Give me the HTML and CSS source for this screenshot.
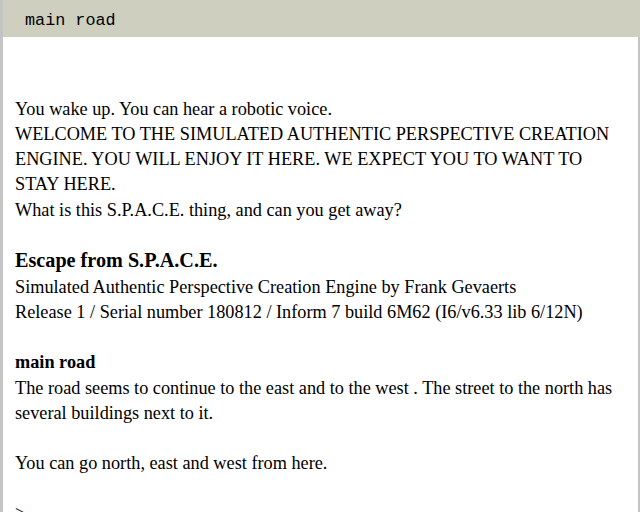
FILE: index.html
```html
<!DOCTYPE html>
<html>
<head>
<meta charset="utf-8">
<link rel="stylesheet" href="styles.css">
</head>
<body>
<div class="status"><span class="loc">main road</span></div>
<div class="main">
<div class="buffer">
<p class="line">You wake up. You can hear a robotic voice.</p>
<p class="line">WELCOME TO THE SIMULATED AUTHENTIC PERSPECTIVE CREATION ENGINE. YOU WILL ENJOY IT HERE. WE EXPECT YOU TO WANT TO STAY HERE.</p>
<p class="line">What is this S.P.A.C.E. thing, and can you get away?</p>
<p class="blank">&nbsp;</p>
<p class="title">Escape from S.P.A.C.E.</p>
<p class="line">Simulated Authentic Perspective Creation Engine by Frank Gevaerts</p>
<p class="line">Release 1 / Serial number 180812 / Inform 7 build 6M62 (I6/v6.33 lib 6/12N)</p>
<p class="blank">&nbsp;</p>
<p class="line bold">main road</p>
<p class="line">The road seems to continue to the east and to the west . The street to the north has several buildings next to it.</p>
<p class="blank">&nbsp;</p>
<p class="line">You can go north, east and west from here.</p>
<p class="blank">&nbsp;</p>
<p class="line prompt">&gt;</p>
</div>
</div>
</body>
</html>
```
FILE: styles.css
```css
html, body {
  margin: 0;
  padding: 0;
  height: 100%;
  overflow: hidden;
}
body {
  background: #c4c4c4;
  font-family: "Liberation Serif", "Times New Roman", serif;
  font-size: 18.25px;
  color: #000;
  display: flex;
  flex-direction: column;
}
.status {
  height: 37px;
  background: #cfcfc0;
  margin-left: 3px;
  display: flex;
  align-items: center;
  padding-left: 22px;
  flex-shrink: 0;
}
.loc {
  font-family: "Liberation Mono", "Courier New", monospace;
  font-size: 16.8px;
  color: #000;
  margin-top: 3px;
}
.main {
  background: #fff;
  margin-left: 3px;
  margin-right: 2px;
  flex: 1;
  padding: 60px 12px 0 12px;
}
.buffer p {
  margin: 0;
  line-height: 25.15px;
}
.title {
  font-weight: bold;
  font-size: 20.2px;
  line-height: 26px !important;
  padding-bottom: 2px;
  margin-top: -1px !important;
}
.bold {
  font-weight: bold;
}
```
